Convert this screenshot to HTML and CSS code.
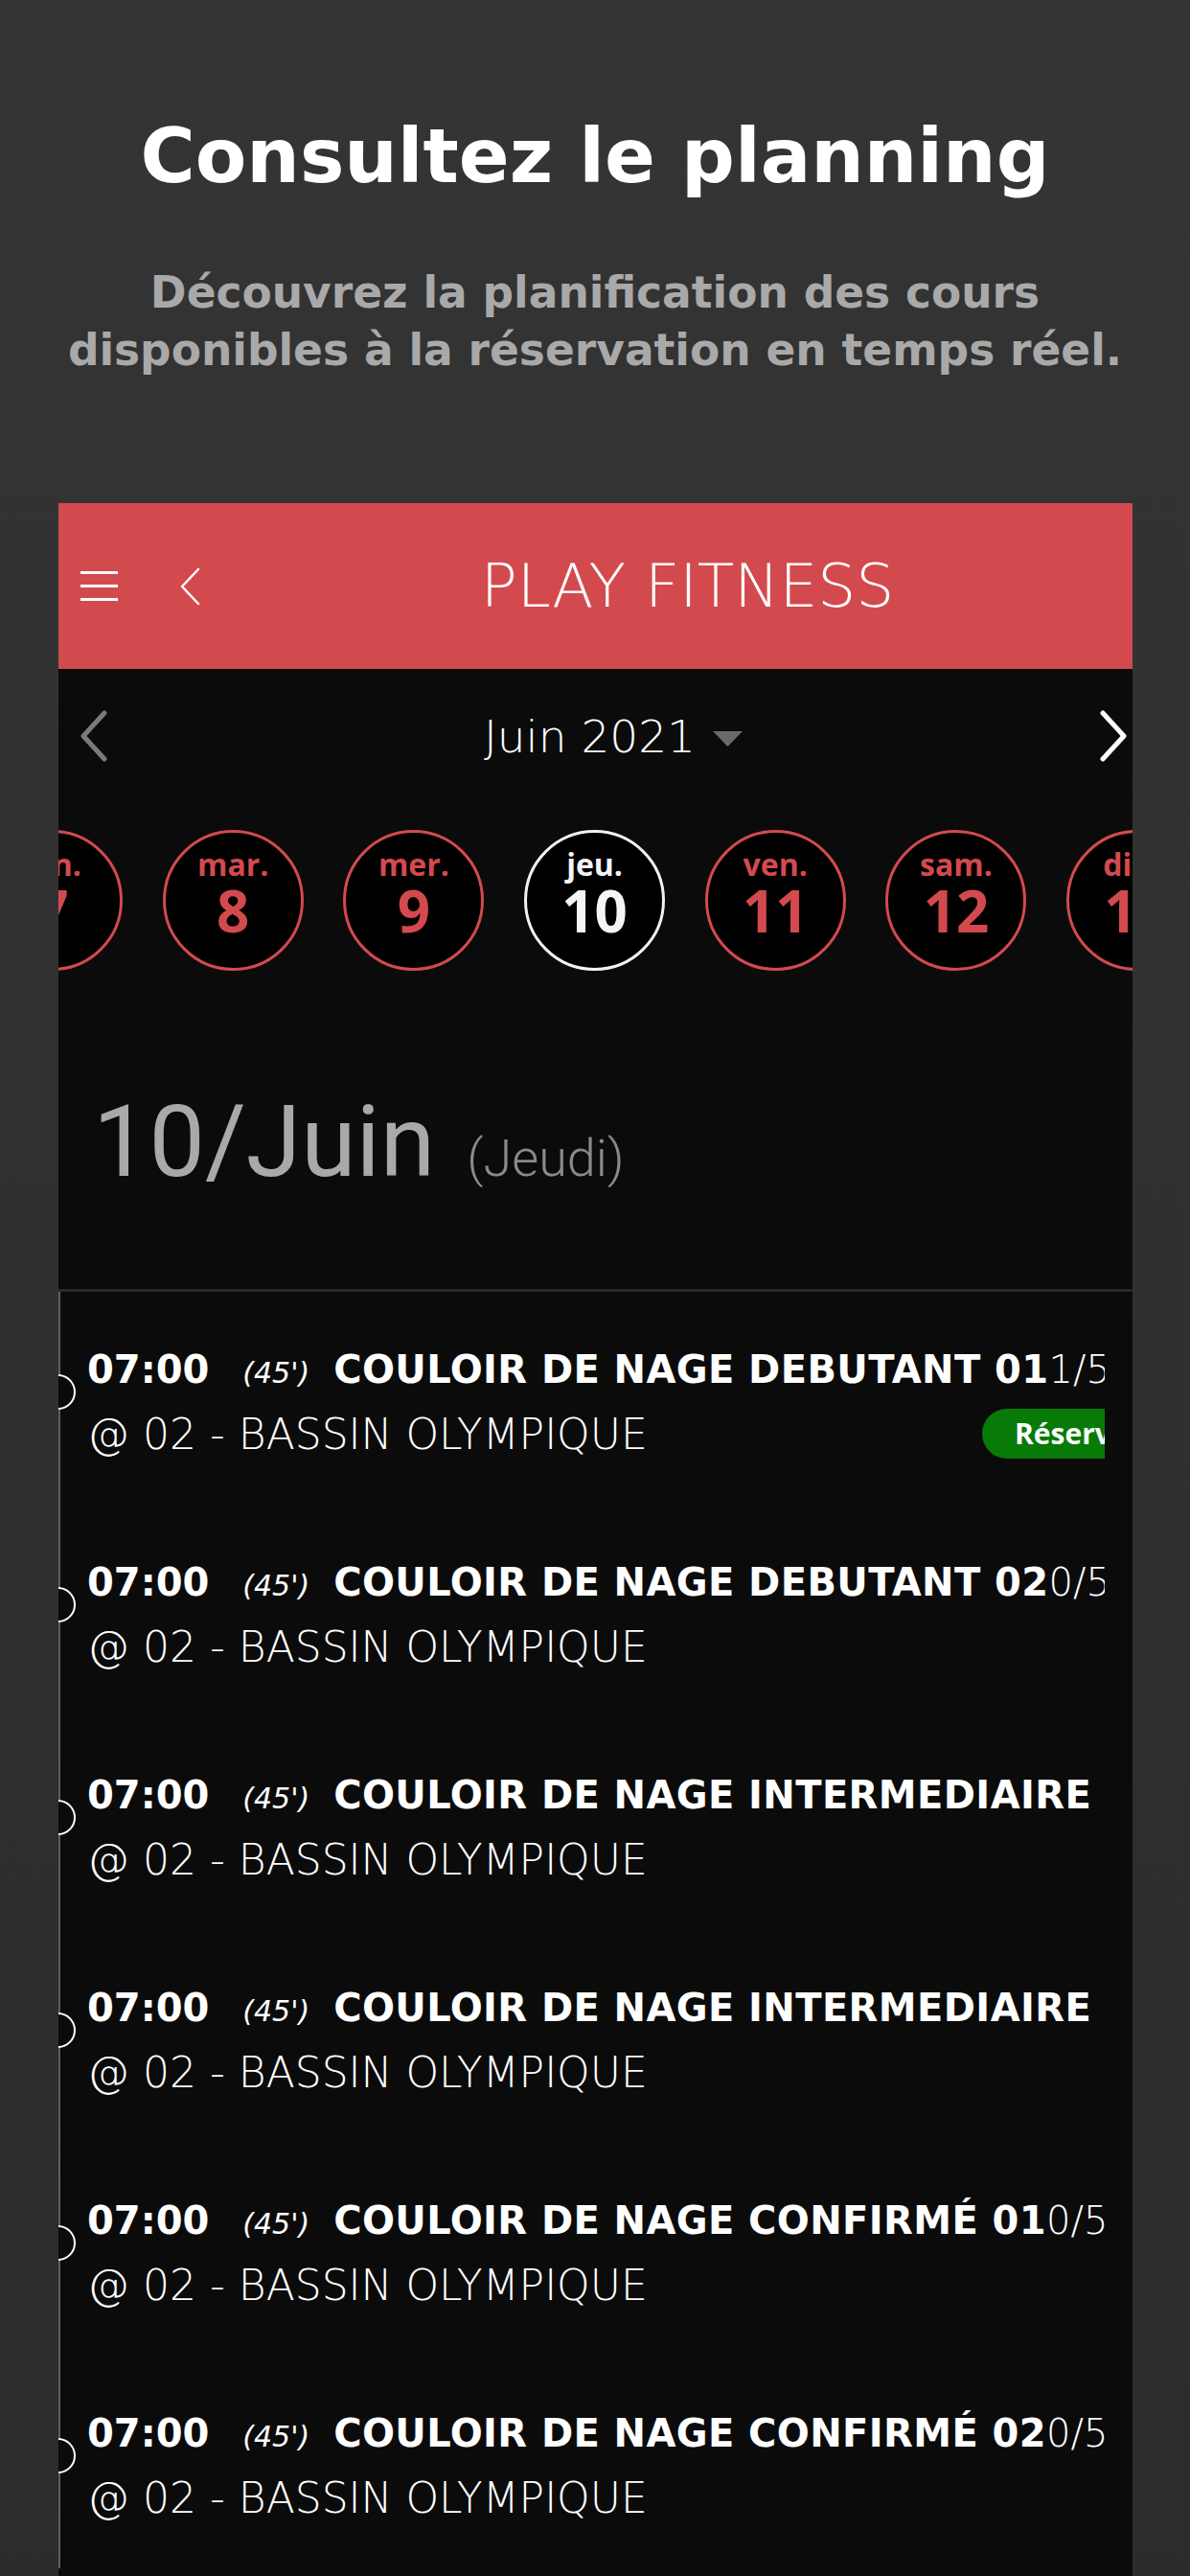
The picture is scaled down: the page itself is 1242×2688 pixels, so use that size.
FILE: index.html
```html
<!DOCTYPE html>
<html lang="fr">
<head>
<meta charset="utf-8">
<title>Consultez le planning</title>
<link rel="stylesheet" href="styles.css">
</head>
<body>
<div class="page">
  <header class="hero">
    <h1 class="hero-title">Consultez le planning</h1>
    <p class="hero-sub">Découvrez la planification des cours<br>disponibles à la réservation en temps réel.</p>
  </header>

  <main class="phone">
    <div class="appbar">
      <svg class="icon-menu" width="39" height="31" viewBox="0 0 39 31"><path d="M0 1.5H39M0 15.5H39M0 29.5H39" stroke="#fff" stroke-width="3" fill="none"/></svg>
      <svg class="icon-back" width="22" height="40" viewBox="0 0 22 40"><polyline points="20,2 3,20 20,38" stroke="#fff" stroke-width="2.5" fill="none" stroke-linecap="round" stroke-linejoin="round"/></svg>
      <div class="appbar-title">PLAY FITNESS</div>
    </div>

    <div class="month-row">
      <svg width="32" height="56" viewBox="0 0 32 56"><polyline points="27,4 5,28 27,52" stroke="#7a7a7a" stroke-width="5" fill="none" stroke-linecap="round" stroke-linejoin="round"/></svg>
      <div class="month">Juin 2021 <svg class="caret" width="31" height="16" viewBox="0 0 31 16"><polygon points="0,0 31,0 15.5,16" fill="#6a6a6a"/></svg></div>
      <svg width="32" height="56" viewBox="0 0 32 56"><polyline points="5,4 27,28 5,52" stroke="#fff" stroke-width="5" fill="none" stroke-linecap="round" stroke-linejoin="round"/></svg>
    </div>

    <div class="days">
      <div class="day"><span class="day-name">lun.</span><span class="day-num">7</span></div>
      <div class="day"><span class="day-name">mar.</span><span class="day-num">8</span></div>
      <div class="day"><span class="day-name">mer.</span><span class="day-num">9</span></div>
      <div class="day day-active"><span class="day-name">jeu.</span><span class="day-num">10</span></div>
      <div class="day"><span class="day-name">ven.</span><span class="day-num">11</span></div>
      <div class="day"><span class="day-name">sam.</span><span class="day-num">12</span></div>
      <div class="day"><span class="day-name">dim.</span><span class="day-num">13</span></div>
    </div>

    <div class="date-head">
      <span class="date-big">10/Juin</span>
      <span class="date-day">(Jeudi)</span>
    </div>

    <ul class="sessions">
      <li class="session">
        <span class="dot"></span>
        <div class="session-body">
          <div class="s-title"><b class="s-time">07:00</b><i class="s-dur">(45')</i><b class="s-name">COULOIR DE NAGE DEBUTANT 01</b><span class="s-count">1/5</span></div>
          <div class="s-loc-line"><span class="s-loc">@ 02 - BASSIN OLYMPIQUE</span><span class="badge">Réservé</span></div>
        </div>
      </li>
      <li class="session">
        <span class="dot"></span>
        <div class="session-body">
          <div class="s-title"><b class="s-time">07:00</b><i class="s-dur">(45')</i><b class="s-name">COULOIR DE NAGE DEBUTANT 02</b><span class="s-count">0/5</span></div>
          <div class="s-loc-line"><span class="s-loc">@ 02 - BASSIN OLYMPIQUE</span></div>
        </div>
      </li>
      <li class="session">
        <span class="dot"></span>
        <div class="session-body">
          <div class="s-title"><b class="s-time">07:00</b><i class="s-dur">(45')</i><b class="s-name">COULOIR DE NAGE INTERMEDIAIRE&nbsp;01</b><span class="s-count">0/5</span></div>
          <div class="s-loc-line"><span class="s-loc">@ 02 - BASSIN OLYMPIQUE</span></div>
        </div>
      </li>
      <li class="session">
        <span class="dot"></span>
        <div class="session-body">
          <div class="s-title"><b class="s-time">07:00</b><i class="s-dur">(45')</i><b class="s-name">COULOIR DE NAGE INTERMEDIAIRE&nbsp;02</b><span class="s-count">0/5</span></div>
          <div class="s-loc-line"><span class="s-loc">@ 02 - BASSIN OLYMPIQUE</span></div>
        </div>
      </li>
      <li class="session">
        <span class="dot"></span>
        <div class="session-body">
          <div class="s-title"><b class="s-time">07:00</b><i class="s-dur">(45')</i><b class="s-name">COULOIR DE NAGE CONFIRMÉ 01</b><span class="s-count">0/5</span></div>
          <div class="s-loc-line"><span class="s-loc">@ 02 - BASSIN OLYMPIQUE</span></div>
        </div>
      </li>
      <li class="session">
        <span class="dot"></span>
        <div class="session-body">
          <div class="s-title"><b class="s-time">07:00</b><i class="s-dur">(45')</i><b class="s-name">COULOIR DE NAGE CONFIRMÉ 02</b><span class="s-count">0/5</span></div>
          <div class="s-loc-line"><span class="s-loc">@ 02 - BASSIN OLYMPIQUE</span></div>
        </div>
      </li>
    </ul>
  </main>
</div>
</body>
</html>
```

FILE: styles.css
```css
html, body {
  margin: 0;
  padding: 0;
}
body {
  width: 1242px;
  height: 2688px;
  overflow: hidden;
  background: linear-gradient(#343434, #2c2c2c);
  font-family: "DejaVu Sans", "Open Sans", sans-serif;
  color: #fff;
}
.page {
  width: 1242px;
  height: 2688px;
  overflow: hidden;
}

/* hero */
.hero {
  height: 525px;
  box-sizing: border-box;
  padding-top: 113px;
  text-align: center;
}
.hero-title {
  margin: 0;
  font-size: 78px;
  line-height: 100px;
  font-weight: 700;
  color: #fff;
}
.hero-sub {
  margin: 63px 0 0;
  font-size: 45.5px;
  line-height: 60px;
  font-weight: 700;
  color: #a9a9a9;
}

/* phone card */
.phone {
  margin-left: 61px;
  width: 1121px;
  height: 2163px;
  background: #0b0b0b;
  overflow: hidden;
}

.appbar {
  height: 173px;
  background: #d34a4e;
  display: flex;
  align-items: center;
  padding-left: 23px;
}
.icon-back {
  margin-left: 64px;
}
.appbar-title {
  flex: 1;
  padding-left: 44px;
  text-align: center;
  font-size: 63px;
  font-weight: 200;
  color: #fff;
  line-height: 80px;
}

.month-row {
  height: 140px;
  display: flex;
  align-items: center;
  justify-content: space-between;
  padding: 0 4px 0 21px;
}
.month {
  display: flex;
  align-items: center;
  gap: 18px;
  margin-left: 20px;
  font-size: 47px;
  font-weight: 200;
  color: #fff;
}
.caret {
  margin-top: 6px;
}

.days {
  margin-top: 28px;
  margin-left: -80px;
  display: flex;
  gap: 41.7px;
  font-family: "Open Sans", "DejaVu Sans", sans-serif;
}
.day {
  flex: 0 0 147px;
  height: 147px;
  box-sizing: border-box;
  border: 3px solid #d34a4e;
  border-radius: 50%;
  background: #000;
  display: flex;
  flex-direction: column;
  align-items: center;
  padding-top: 15px;
  color: #d34a4e;
  font-weight: 700;
}
.day-active {
  border-color: #f2f2f2;
  color: #f4f5f8;
}
.day-name {
  font-size: 32px;
  line-height: 36px;
}
.day-num {
  font-size: 60px;
  line-height: 60px;
}

.date-head {
  height: 335px;
  box-sizing: border-box;
  padding: 127px 0 0 36px;
  border-bottom: 3px solid #2a2a2a;
  display: flex;
  align-items: baseline;
  gap: 33px;
  font-family: Roboto, "Liberation Sans", sans-serif;
}
.date-big {
  font-size: 104px;
  line-height: 104px;
  color: #a9a9a9;
}
.date-day {
  font-size: 54px;
  font-weight: 300;
  color: #8a8a8a;
}

/* sessions */
.sessions {
  list-style: none;
  margin: 0;
  padding: 0;
  border-left: 2px solid #5e5e5e;
}
.session {
  position: relative;
  height: 222px;
  box-sizing: border-box;
  padding: 56px 0 0 28px;
}
.dot {
  position: absolute;
  left: -21px;
  top: 86px;
  width: 37px;
  height: 37px;
  box-sizing: border-box;
  border: 2.5px solid #fff;
  border-radius: 50%;
  background: #0b0b0b;
}
.session-body {
  width: 1062px;
  overflow: hidden;
}
.s-title {
  display: flex;
  align-items: baseline;
  white-space: nowrap;
  font-size: 40px;
  line-height: 50px;
}
.s-time {
  font-weight: 700;
}
.s-dur {
  font-size: 30px;
  font-weight: 200;
  margin: 0 25px 0 35px;
}
.s-name {
  font-weight: 700;
  letter-spacing: 0.4px;
}
.s-count {
  font-weight: 200;
}
.s-loc-line {
  display: flex;
  align-items: center;
  height: 52px;
  margin-top: 12px;
  white-space: nowrap;
}
.s-loc {
  flex: 0 0 934px;
  font-size: 44px;
  font-weight: 200;
}
.badge {
  flex-shrink: 0;
  height: 52px;
  line-height: 52px;
  padding: 0 34px;
  border-radius: 26px;
  background: #087a08;
  font-family: "Open Sans", "DejaVu Sans", sans-serif;
  font-size: 30px;
  font-weight: 700;
  color: #fff;
}
```
